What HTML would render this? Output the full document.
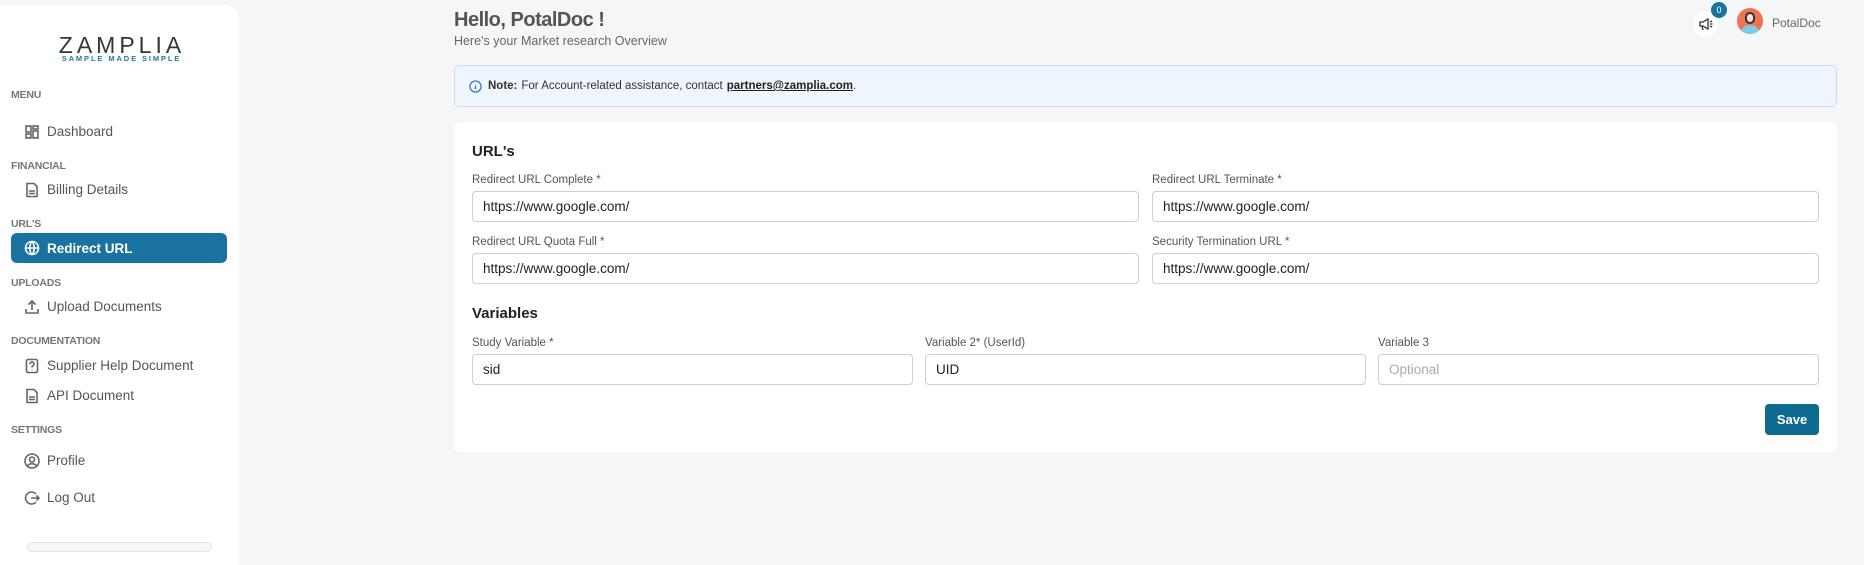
<!DOCTYPE html>
<html><head><meta charset="utf-8">
<style>
*{box-sizing:border-box;margin:0;padding:0}
body{width:1864px;height:545px;background:#f5f6f6;font-family:"Liberation Sans",sans-serif;position:relative;overflow:hidden;color:#333}
.side{position:absolute;left:0;top:5px;width:239px;height:560px;background:#fff;border-radius:0 14px 0 0}
.logo{position:absolute;left:0;width:239px;text-align:center}
.z{top:28px;font-size:23px;line-height:24px;letter-spacing:4px;color:#33363b;padding-left:5px}
.tag{top:50px;font-size:7.5px;line-height:8px;font-weight:bold;letter-spacing:1.9px;color:#1f7aa8;padding-left:4px}
.sec{position:absolute;left:11px;font-size:10.5px;line-height:12px;font-weight:bold;color:#777;letter-spacing:-.2px}
.item{position:absolute;left:11px;width:216px;height:29px;font-size:13.5px;color:#555;display:flex;align-items:center;padding-left:13px}
.item svg{width:16px;height:16px;margin-right:7px;fill:none;stroke:#666;stroke-width:1.6}
.item.act{background:#1a72a1;color:#fff;border-radius:6px;font-weight:bold;height:30px}
.item.act svg{stroke:#fff}
.h1{position:absolute;left:454px;top:9px;font-size:20px;color:#555;font-weight:bold;letter-spacing:-.5px}
.sub{position:absolute;left:454px;top:34px;font-size:12.5px;color:#666}
.note{position:absolute;left:454px;top:65px;width:1383px;height:42px;background:#eef5fc;border:1px solid #c8dcee;border-radius:5px;font-size:11.5px;color:#333;display:flex;align-items:center;padding-left:14px}
.note b{margin:0 4px 0 6px}
.note u{font-weight:bold;color:#222;margin-left:4px}
.card{position:absolute;left:454px;top:122px;width:1383px;height:330px;background:#fff;border-radius:6px}
.h2{position:absolute;font-size:15px;font-weight:bold;color:#222}
.lab{position:absolute;font-size:11.5px;color:#555}
.inp{position:absolute;height:31px;border:1px solid #cfcfcf;border-radius:4px;font-size:13.5px;color:#222;padding-left:10px;display:flex;align-items:center;background:#fff}
.btn{position:absolute;left:1311px;top:282px;width:54px;height:31px;background:#0f6a90;border-radius:4px;color:#fff;font-size:13px;font-weight:bold;display:flex;align-items:center;justify-content:center}
</style></head><body>
<div class="side">
<div class="logo z">ZAMPLIA</div>
<div class="logo tag">SAMPLE MADE SIMPLE</div>
<div class="sec" style="top:84px">MENU</div>
<div class="item" style="top:112px"><svg viewBox="0 0 16 16"><rect x="2" y="2" width="5" height="6"/><rect x="9" y="2" width="5" height="3"/><rect x="2" y="10" width="5" height="4"/><rect x="9" y="7" width="5" height="7"/></svg>Dashboard</div>
<div class="sec" style="top:155px">FINANCIAL</div>
<div class="item" style="top:170px"><svg viewBox="0 0 16 16"><path d="M3 1.5h7l3 3v10H3z M5 9h6M5 11.5h6"/></svg>Billing Details</div>
<div class="sec" style="top:213px">URL'S</div>
<div class="item act" style="top:228px"><svg viewBox="0 0 16 16"><circle cx="8" cy="8" r="6.5"/><path d="M1.5 8h13M8 1.5c-3 3.5-3 9.5 0 13M8 1.5c3 3.5 3 9.5 0 13"/></svg>Redirect URL</div>
<div class="sec" style="top:272px">UPLOADS</div>
<div class="item" style="top:287px"><svg viewBox="0 0 16 16"><path d="M2 10v4h12v-4M8 11V2M4.5 5.5L8 2l3.5 3.5"/></svg>Upload Documents</div>
<div class="sec" style="top:330px">DOCUMENTATION</div>
<div class="item" style="top:346px"><svg viewBox="0 0 16 16"><rect x="2.5" y="1.5" width="11" height="13" rx="1.5"/><path d="M6 6a2 2 0 1 1 2.5 2c-.5.2-.5.7-.5 1.5M8 11.5v.5"/></svg>Supplier Help Document</div>
<div class="item" style="top:376px"><svg viewBox="0 0 16 16"><path d="M3 1.5h7l3 3v10H3z M5 9h6M5 11.5h6"/></svg>API Document</div>
<div class="sec" style="top:419px">SETTINGS</div>
<div class="item" style="top:441px"><svg viewBox="0 0 16 16"><circle cx="8" cy="8" r="7"/><circle cx="8" cy="6.5" r="2.5"/><path d="M3.5 13c1.5-3 7.5-3 9 0"/></svg>Profile</div>
<div class="item" style="top:478px"><svg viewBox="0 0 16 16"><path d="M12 4a6 6 0 1 0 0 8M7 8h8M12.5 5.5L15 8l-2.5 2.5"/></svg>Log Out</div>
<div style="position:absolute;left:27px;top:537px;width:185px;height:10px;border:1px solid #e4e4e4;border-radius:6px;background:#f7f7f7"></div>
</div>

<div class="h1">Hello, PotalDoc !</div>
<div class="sub">Here's your Market research Overview</div>

<div style="position:absolute;left:1693px;top:12px;width:25px;height:25px;border-radius:50%;background:#fff;display:flex;align-items:center;justify-content:center"><svg width="14" height="13" viewBox="0 0 14 13" fill="none" stroke="#333" stroke-width="1.3"><path d="M1 4h3l5-3v10L4 8H1z M3 8l1 4M11 4l2-1M11 6h2.5M11 8l2 1"/></svg></div>
<div style="position:absolute;left:1711px;top:2px;width:16px;height:16px;border-radius:50%;background:#1a72a1;color:#fff;font-size:9px;display:flex;align-items:center;justify-content:center">0</div>
<div style="position:absolute;left:1737px;top:8px;width:26px;height:26px;border-radius:50%;background:#f07254;overflow:hidden"><div style="position:absolute;left:8px;top:4px;width:10px;height:12px;border-radius:5px;background:#fbe3d6;border:2px solid #333"></div><div style="position:absolute;left:4px;top:17px;width:18px;height:12px;border-radius:8px 8px 0 0;background:#7ecbe6"></div></div>
<div style="position:absolute;left:1772px;top:16px;font-size:12px;color:#666">PotalDoc</div>

<div class="note"><svg width="13" height="13" viewBox="0 0 14 14" fill="none" stroke="#2a6fc9" stroke-width="1.3"><circle cx="7" cy="7" r="6"/><path d="M7 6v4M7 4v.5"/></svg><b>Note:</b>For Account-related assistance, contact<u>partners@zamplia.com</u>.</div>

<div class="card">
<div class="h2" style="left:18px;top:21px">URL's</div>
<div class="lab" style="left:18px;top:52px">Redirect URL Complete *</div>
<div class="inp" style="left:18px;top:69px;width:667px">https://www.google.com/</div>
<div class="lab" style="left:698px;top:52px">Redirect URL Terminate *</div>
<div class="inp" style="left:698px;top:69px;width:667px">https://www.google.com/</div>
<div class="lab" style="left:18px;top:114px">Redirect URL Quota Full *</div>
<div class="inp" style="left:18px;top:131px;width:667px">https://www.google.com/</div>
<div class="lab" style="left:698px;top:114px">Security Termination URL *</div>
<div class="inp" style="left:698px;top:131px;width:667px">https://www.google.com/</div>
<div class="h2" style="left:18px;top:183px">Variables</div>
<div class="lab" style="left:18px;top:215px">Study Variable *</div>
<div class="inp" style="left:18px;top:232px;width:441px">sid</div>
<div class="lab" style="left:471px;top:215px">Variable 2* (UserId)</div>
<div class="inp" style="left:471px;top:232px;width:441px">UID</div>
<div class="lab" style="left:924px;top:215px">Variable 3</div>
<div class="inp" style="left:924px;top:232px;width:441px;color:#aaa">Optional</div>
<div class="btn">Save</div>
</div>
</body></html>
